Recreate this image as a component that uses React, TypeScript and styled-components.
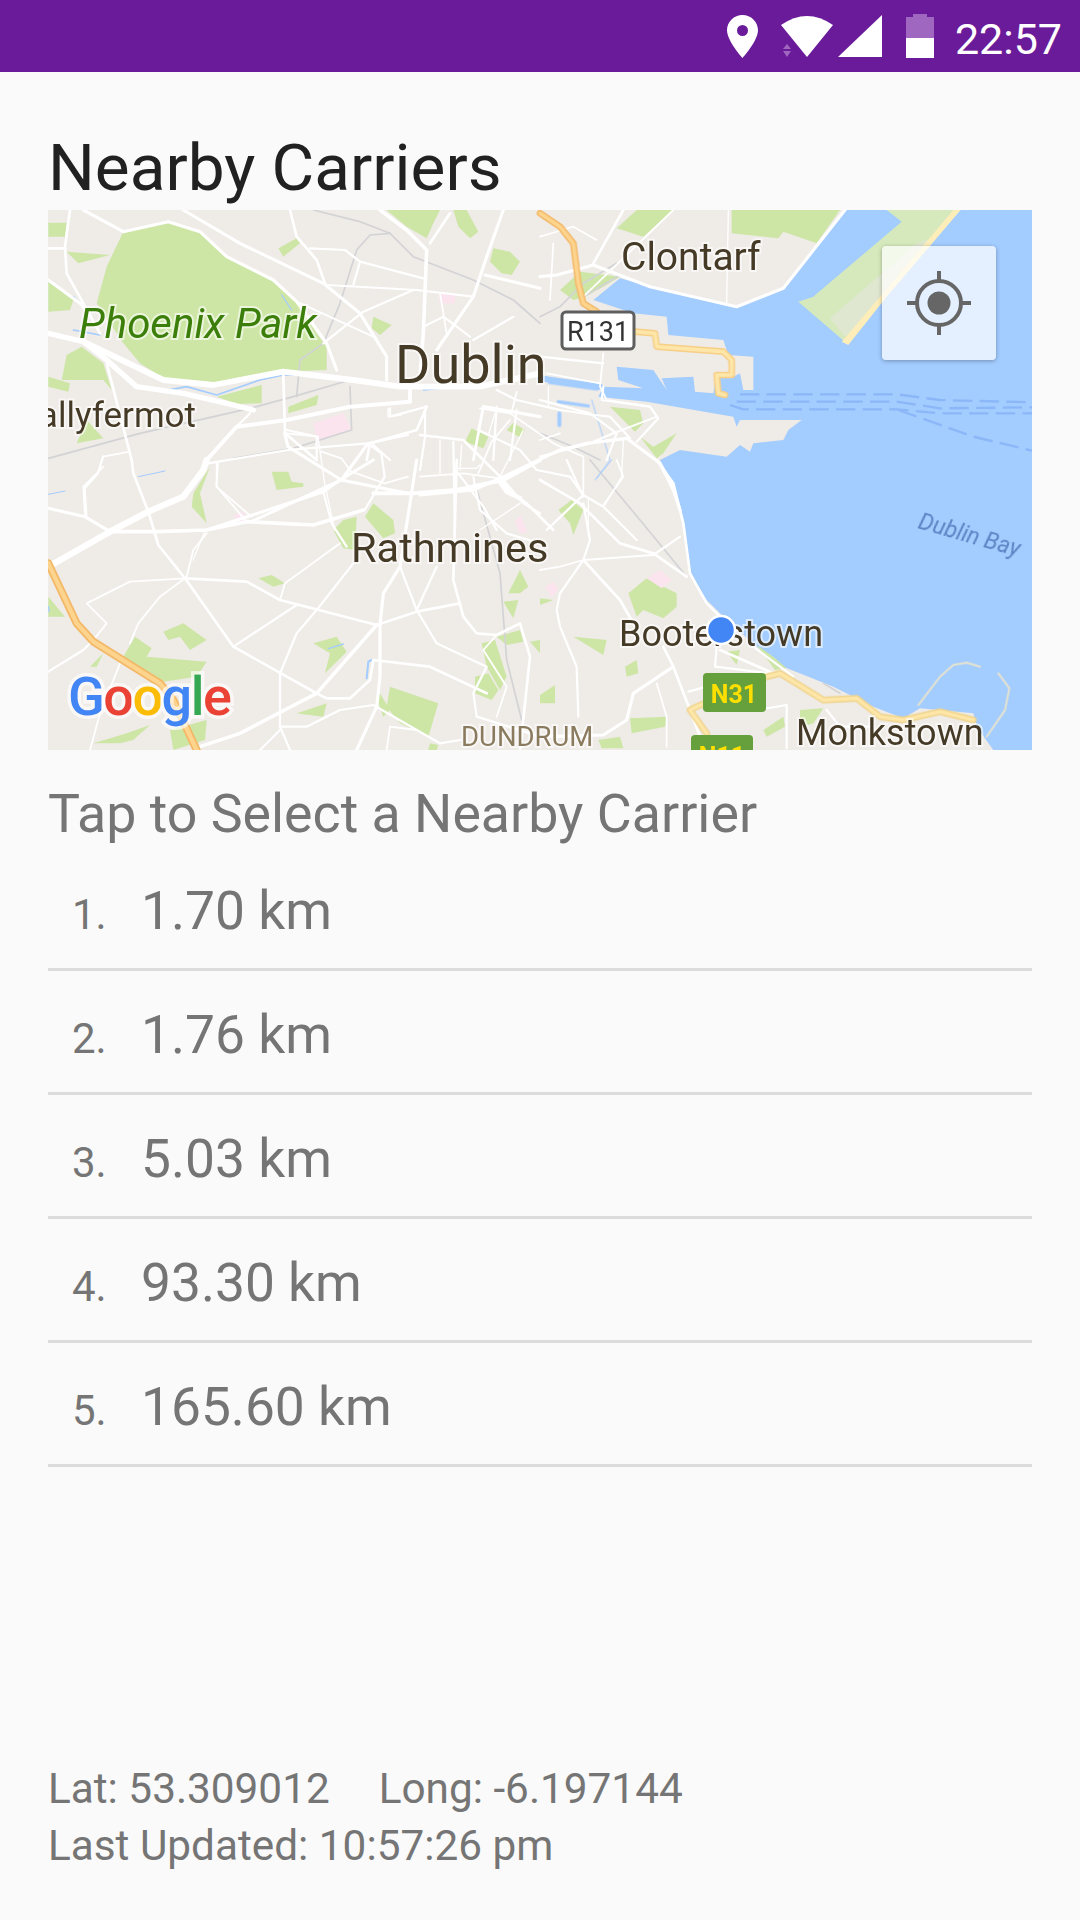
import React from "react";
import styled, { createGlobalStyle } from "styled-components";

const GlobalStyle = createGlobalStyle`
  html, body {
    margin: 0;
    padding: 0;
    background: #fafafa;
    overflow: hidden;
  }
`;

const COLORS = {
  land: "#efebe7",
  water: "#a3ccff",
  green: "#cde6a6",
  pink: "#fbe4ee",
  rail: "#d3d3d6",
};

// map shapes are traced in 3x crop coordinates, one group per crop
type Quarter = {
  x: number;
  y: number;
  greens: string[];
  pinks: string[];
  rails: string[];
  creeks: [number, string][];
  roads: [number, string][];
};

const NORTH_WEST: Quarter = {
  x: 40,
  y: 200,
  greens: [
    "250,95 385,65 480,95 560,170 700,240 770,305 830,400 860,440 860,510 730,515 520,550 370,535 300,490 250,430 170,310 200,200",
    "25,68 80,68 75,110 25,110",
    "80,155 210,165 115,190",
    "25,245 100,300 90,330 25,335",
    "125,440 190,490 215,570 190,540 65,540 80,465",
    "25,530 90,550 85,575 25,560",
    "530,590 665,555 665,610 590,612",
    "745,620 835,585 830,615 745,640",
    "715,145 770,115 780,130 730,170",
    "1040,30 1200,30 1180,70 1160,115 1100,80",
    "1240,30 1280,30 1315,95 1290,115 1255,80",
    "1360,145 1410,155 1440,185 1415,225 1385,220 1350,185",
    "1000,350 1055,375 1020,405 995,385",
    "1275,725 1295,685 1345,710 1330,745",
    "1400,690 1420,668 1455,690 1440,712",
    "110,730 140,660 190,715",
  ],
  pinks: ["820,670 910,640 935,690 830,720", "1195,280 1245,280 1245,310 1200,310"],
  rails: [
    "820,30 960,65 1050,100 1120,170 1300,240 1420,300 1500,370",
    "1050,100 990,105 950,150 900,310 850,430 780,480 770,590",
    "25,775 300,700 630,625 760,590 930,540",
    "930,560 935,690 760,745 580,775",
  ],
  creeks: [
    [5, "375,572 440,560 530,585 660,540 730,525 800,525 920,540"],
    [5, "130,320 100,290"],
    [4, "100,390 180,405"],
    [4, "725,285 755,330"],
    [4, "1150,570 1200,565"],
    [3, "755,655 830,645"],
  ],
  roads: [
    [6, "90,30 75,140 80,220 130,310 180,400"],
    [6, "25,145 75,145"],
    [7, "25,240 120,310 150,345"],
    [12, "25,400 130,425 200,480 290,560 430,580 560,610 640,630"],
    [7, "130,30 250,95 385,65 480,95 560,170 700,240 770,305 860,430 890,510"],
    [7, "430,30 600,130 850,250 960,340 1040,470 1040,540"],
    [6, "750,30 770,110 830,180 855,250"],
    [5, "810,145 915,150 960,185 1150,235"],
    [5, "860,255 1130,270 1300,290"],
    [5, "960,185 940,255"],
    [5, "850,430 970,335 1120,270"],
    [4, "770,305 1000,410"],
    [8, "1020,30 1100,90 1160,150 1150,400 1140,530"],
    [6, "1230,40 1170,130"],
    [7, "1390,30 1340,170 1300,290 1190,450"],
    [7, "1335,225 1500,265"],
    [13, "130,425 370,540 520,555 730,515 940,540 1080,560 1320,560 1500,520"],
    [6, "200,490 275,780"],
    [9, "1110,565 1110,605 930,620 740,660 590,680 500,780"],
    [6, "730,525 735,700 830,780"],
    [5, "740,690 830,710 830,780"],
    [5, "590,680 630,640"],
    [6, "1160,620 1130,690 990,730 980,780"],
    [5, "1050,625 1050,650 1160,620"],
    [6, "1330,620 1300,780"],
    [7, "1330,620 1500,650"],
    [5, "1370,620 1360,780"],
    [5, "1430,630 1410,780"],
    [5, "1000,735 1050,780"],
    [5, "1150,380 1210,350 1290,410"],
    [5, "1420,350 1300,420"],
    [4, "1200,280 1220,400"],
  ],
};

const NORTH_EAST: Quarter = {
  x: 540,
  y: 200,
  greens: [
    "230,85 290,30 400,30 310,110",
    "575,30 900,30 830,130 730,95 715,115 575,100",
    "60,270 120,215 240,230 190,260 135,290 100,300",
    "210,620 300,630 310,670 285,695",
    "300,710 340,740 410,700 370,760 350,775",
  ],
  pinks: [],
  rails: ["0,350 60,320 130,250 230,190", "0,700 100,740 180,780", "130,290 240,225"],
  creeks: [
    [18, "0,535 180,560"],
  ],
  roads: [
    [6, "250,30 160,190"],
    [7, "0,230 50,225 160,195 330,260 590,320 730,265 915,30"],
    [3, "565,30 560,310"],
    [4, "400,30 130,290"],
    [4, "40,130 30,300"],
    [4, "0,110 100,80 170,120"],
    [4, "190,460 180,560 200,600 330,620 350,650 220,700"],
    [5, "0,470 190,490"],
    [4, "20,520 180,550"],
    [5, "0,600 150,640 230,700 200,780"],
    [4, "60,700 0,720"],
    [5, "0,770 150,730 220,700"],
  ],
};

const SOUTH_WEST: Quarter = {
  x: 40,
  y: 460,
  greens: [
    "695,35 745,35 755,65 790,70 790,80 710,90",
    "910,180 950,170 945,270 910,265 880,210",
    "1000,130 1060,180 1065,220 1030,235 975,170",
    "655,355 695,345 735,370 700,380",
    "370,515 430,490 500,540 450,570 420,530 385,540",
    "820,550 890,530 920,575 855,640 870,580",
    "285,530 335,565 320,590 500,605 470,650 370,665 250,590",
    "150,620 190,580 170,620",
    "25,410 75,470 25,470",
    "1325,550 1365,540 1400,650 1380,690 1340,620",
    "1305,650 1345,640 1375,690 1355,720 1305,700",
    "1050,680 1195,730 1165,830 1080,790 1040,740",
    "1020,700 1050,750 1030,770 1015,730",
    "770,760 860,730 850,770",
    "160,850 260,820 330,795 280,840 240,850",
    "390,810 500,780 495,840 400,870",
    "1405,400 1440,330 1465,380 1440,400",
    "1390,425 1435,420 1420,475",
    "1370,530 1440,510 1450,545 1400,555",
    "1470,545 1500,540 1500,580",
    "1170,850 1195,855 1190,870 1165,870",
    "460,100 510,20 480,100 500,190 455,140",
  ],
  pinks: ["580,170 600,152 625,170 600,190", "1425,185 1442,165 1462,215 1440,222"],
  rails: ["1300,50 1380,340 1400,600 1445,780"],
  creeks: [
    [6, "980,655 985,605 995,600"],
    [4, "865,566 910,552"],
    [3, "295,50 375,33"],
    [3, "25,103 75,93"],
    [4, "25,440 28,455"],
  ],
  roads: [
    [7, "25,145 135,170 210,215"],
    [8, "210,215 350,215 500,210 620,185 820,195 970,150"],
    [14, "25,320 210,215 325,155 430,110 490,30 500,0"],
    [6, "325,155 280,40 275,0"],
    [6, "325,155 355,255 435,355 580,560 830,700 860,715 930,715 990,660 1000,600 1170,620 1340,700"],
    [4, "135,170 130,80 190,20"],
    [4, "435,355 270,365 140,430 200,490 160,540"],
    [4, "435,355 360,410 295,490 270,550"],
    [6, "435,355 620,365 720,420 1010,495 1130,455 1260,430"],
    [4, "500,220 460,270 440,350"],
    [4, "620,185 530,80 530,10"],
    [7, "500,210 850,95 900,60 1000,0"],
    [5, "850,95 875,190 920,260"],
    [4, "720,420 735,370 900,250"],
    [5, "770,435 580,560"],
    [5, "940,310 830,450 770,520 720,640 720,800 750,870"],
    [8, "1010,495 830,700 600,820 480,860"],
    [7, "1020,495 1020,650 1010,740 950,870"],
    [7, "1020,495 1030,400 1080,320 1110,130 1130,0"],
    [5, "1080,320 1130,450 1190,550 1340,620 1300,700 1310,770 1500,830"],
    [6, "1250,0 1240,360 1270,470 1310,520 1370,525 1440,490 1470,590 1440,870"],
    [5, "1190,320 1130,450"],
    [5, "720,800 800,800 900,750 1000,735 1130,810 1200,850 1260,840"],
    [5, "720,810 660,870"],
    [9, "1000,100 1120,100 1250,90 1390,60 1500,0"],
    [5, "1390,60 1450,130 1500,160"],
    [4, "1370,525 1330,570 1400,680 1370,770"],
    [5, "25,635 130,570 160,540"],
    [4, "240,610 180,760 150,870"],
    [4, "1040,870 1050,800 1130,810"],
    [5, "1300,50 1320,150 1400,220 1500,250"],
  ],
};

const SOUTH_EAST: Quarter = {
  x: 540,
  y: 460,
  greens: [
    "55,150 95,120 130,150 100,225 90,190",
    "265,400 320,355 410,400 410,440 370,475 310,450 290,470",
    "100,530 200,540 190,585",
    "560,575 600,570 590,615",
    "255,620 290,600 295,640 260,650",
    "0,705 45,675 45,730 0,730",
    "270,775 380,770 375,800 275,820",
    "175,840 240,830 250,865 185,865",
    "780,750 850,745 820,790 790,800 780,780",
    "670,810 730,770 735,800 680,830",
    "650,555 700,590 740,625 705,630",
    "0,415 40,420 0,435",
  ],
  pinks: ["320,355 360,330 395,360 365,385", "15,380 40,365 55,390 35,410"],
  rails: ["150,0 300,180 440,350", "850,670 900,700"],
  creeks: [[3, "170,55 215,0"]],
  roads: [
    [6, "0,60 120,130 240,250 340,280 440,350"],
    [5, "130,130 150,240 130,300 60,400 50,450 60,500 110,620 115,770"],
    [4, "190,135 250,50 230,0"],
    [6, "130,300 240,420 280,490"],
    [5, "340,285 420,230"],
    [5, "130,300 340,285"],
    [4, "0,330 60,320 130,300"],
    [5, "80,0 130,110"],
    [6, "350,0 400,70 430,190 450,340 500,430 540,470"],
    [6, "540,570 700,640"],
    [5, "640,560 760,650"],
    [6, "370,560 400,620 450,750 480,830"],
    [7, "0,830 190,825 260,780 280,700 400,620"],
    [5, "530,560 525,620 690,640"],
    [4, "350,670 380,770 380,860"],
    [5, "445,695 500,680"],
    [5, "680,745 740,735 740,865"],
    [5, "860,750 900,800 1000,800"],
  ],
};

const CITY_CENTRE: Quarter = {
  x: 420,
  y: 370,
  greens: [],
  pinks: [],
  rails: [],
  creeks: [
    [3, "515,90 570,270 525,330"],
    [10, "415,95 505,108"],
    [12, "418,130 418,165"],
    [14, "390,35 530,55"],
  ],
  roads: [
    [7, "0,375 160,360 240,325 420,240 500,220 620,205 720,280 760,360 780,420"],
    [5, "190,110 175,180 300,240 350,300 450,320 490,375 550,410 650,510"],
    [6, "0,195 130,210 240,320 270,365 320,400 400,480"],
    [4, "180,115 270,130 400,220 490,260 490,375"],
    [4, "270,150 215,215 175,310"],
    [3, "225,130 205,195"],
    [3, "310,180 240,320"],
    [3, "60,210 60,310"],
    [5, "100,215 105,500"],
    [3, "125,225 120,300"],
    [4, "0,320 130,310 240,325"],
    [3, "110,295 170,295 180,285"],
    [5, "115,310 190,410 230,480"],
    [3, "300,400 180,480"],
    [5, "490,375 380,480"],
    [3, "505,390 505,500"],
    [3, "610,210 605,320 555,405"],
    [4, "290,65 275,125"],
    [5, "230,60 290,90 420,120 520,135 570,140 630,205"],
    [3, "385,50 385,110"],
    [5, "550,50 545,90 690,110 715,145 650,215"],
    [5, "15,110 15,200 0,300"],
    [10, "235,330 260,365 300,385"],
  ],
};

const WEST_SIDE: Quarter = {
  x: 48,
  y: 400,
  greens: [],
  pinks: [],
  rails: [],
  creeks: [],
  roads: [
    [5, "480,190 720,150 960,130 1080,105"],
    [4, "510,190 505,260 610,350"],
    [5, "960,130 1000,160 1010,230 950,330"],
    [7, "610,365 880,240 960,130"],
    [7, "710,100 720,140 880,240 1080,280"],
    [5, "165,170 150,220 110,265 115,345"],
    [4, "165,170 245,155"],
    [3, "810,110 830,250 860,390"],
    [4, "820,155 880,175 910,215 1010,250 1080,230"],
    [3, "470,395 435,480"],
    [4, "715,100 810,110"],
    [3, "1020,25 1020,50 1060,45"],
  ],
};

const QUARTERS = [NORTH_WEST, NORTH_EAST, SOUTH_WEST, SOUTH_EAST, WEST_SIDE, CITY_CENTRE];

const ROAD_SCALE = 1.35;

const crop = (q: { x: number; y: number }) => `translate(${q.x} ${q.y}) scale(${1 / 3})`;

const toPage = (origin: [number, number], pts: [number, number][]) =>
  pts.map(([x, y]) => `${origin[0] + x / 3},${origin[1] + y / 3}`);

const WATER_POINTS = [
  ...toPage([540, 200], [
    [915, 30], [730, 265], [590, 325], [350, 265], [240, 235], [160, 300], [280, 340], [380, 350],
    [385, 405], [550, 420], [565, 465], [640, 470], [640, 570], [610, 570], [600, 520], [580, 530],
    [530, 520], [520, 580], [465, 575], [460, 530], [365, 535], [380, 570], [340, 510], [230, 500],
    [235, 540], [310, 565], [190, 560], [175, 590], [320, 605], [580, 650], [590, 680], [600, 660],
    [785, 660], [745, 690], [730, 720], [640, 730], [630, 755], [600, 735], [560, 770], [420, 750],
    [360, 780],
  ]),
  ...toPage([540, 460], [
    [360, 0], [400, 70], [430, 190], [450, 340], [500, 420], [540, 460], [650, 560], [730, 620],
    [880, 680], [1000, 740], [1090, 775], [1140, 745], [1300, 760], [1310, 800], [1360, 870],
  ]),
  "1032,750",
  "1032,210",
].join(" ");

const Page = styled.div`
  width: 1080px;
  height: 1920px;
  display: flex;
  flex-direction: column;
  background: #fafafa;
  font-family: Roboto, "Noto Sans", sans-serif;
`;

const StatusBar = styled.div`
  height: 72px;
  flex: none;
  background: #6a1b9a;
  display: flex;
  align-items: center;
  justify-content: flex-end;
  padding-right: 18px;
`;

const StatusIcon = styled.svg<{ $gap: number }>`
  display: block;
  margin-right: ${(p) => p.$gap}px;
`;

const Clock = styled.span`
  color: #fff;
  font-size: 43px;
  line-height: 72px;
  padding-top: 5px;
`;

const Content = styled.div`
  flex: 1;
  display: flex;
  flex-direction: column;
  padding: 53px 48px 46px;
`;

const Title = styled.h1`
  margin: 0;
  font-size: 65.7px;
  line-height: 85px;
  font-weight: 400;
  color: #212121;
`;

const MapBox = styled.div`
  position: relative;
  width: 984px;
  height: 540px;
  overflow: hidden;
  background: ${COLORS.land};
`;

const MapSvg = styled.svg`
  display: block;
`;

const SoftLayer = styled.g`
  filter: blur(0.5px);
`;

const PlaceLabel = styled.text<{ $size: number; $fill?: string; $italic?: boolean; $plain?: boolean }>`
  font-family: Roboto, sans-serif;
  font-size: ${(p) => p.$size}px;
  font-style: ${(p) => (p.$italic ? "italic" : "normal")};
  fill: ${(p) => p.$fill ?? "#453a26"};
  stroke: ${(p) => (p.$plain ? "none" : "rgba(255, 255, 255, 0.6)")};
  stroke-width: 4px;
  paint-order: stroke;
`;

const ShieldText = styled.text<{ $fill: string; $size: number; $bold?: boolean }>`
  font-family: Roboto, sans-serif;
  font-size: ${(p) => p.$size}px;
  font-weight: ${(p) => (p.$bold ? 700 : 400)};
  fill: ${(p) => p.$fill};
  text-anchor: middle;
`;

const GoogleMark = styled.text`
  font-family: Roboto, sans-serif;
  font-size: 54px;
  font-weight: 500;
  letter-spacing: -1.5px;
  stroke: rgba(255, 255, 255, 0.65);
  stroke-width: 7px;
  paint-order: stroke;
`;

const LocateButton = styled.div`
  position: absolute;
  top: 36px;
  right: 36px;
  width: 114px;
  height: 114px;
  border-radius: 4px;
  background: rgba(255, 255, 255, 0.7);
  box-shadow: 0 1px 4px rgba(0, 0, 0, 0.3);
  display: flex;
  align-items: center;
  justify-content: center;
`;

const Prompt = styled.div`
  margin-top: 31px;
  font-size: 53.7px;
  line-height: 66px;
  color: #757575;
`;

const CarrierList = styled.div`
  display: flex;
  flex-direction: column;
`;

const CarrierRow = styled.div`
  display: flex;
  align-items: baseline;
  height: 121px;
  border-bottom: 3px solid #dcdcdc;
`;

const RowIndex = styled.span`
  width: 93px;
  padding-left: 24px;
  box-sizing: border-box;
  padding-top: 31px;
  font-size: 42px;
  line-height: 66px;
  color: #757575;
`;

const RowDistance = styled.span`
  padding-top: 31px;
  font-size: 53.3px;
  line-height: 66px;
  color: #757575;
`;

const Footer = styled.div`
  margin-top: auto;
  font-size: 42.3px;
  line-height: 57px;
  color: #757575;
`;

const FooterRow = styled.div`
  display: flex;
  gap: 49px;
`;

const DISTANCES = ["1.70 km", "1.76 km", "5.03 km", "93.30 km", "165.60 km"];

const HIGHWAY_NORTH = "0,40 60,80 100,130 115,250 130,310 170,335";
const HIGHWAY_PORT = "285,395 345,400 350,440 550,455 575,480 575,525 530,525 535,580 555,585";
const HIGHWAY_WEST = "25,310 110,490 160,545 360,670 400,720 470,870";
const HIGHWAY_COAST =
  "500,820 450,750 470,740 680,650 720,640 850,720 950,715 1020,770 1090,780 1200,755 1300,780";

function Carto() {
  return (
    <MapSvg width={984} height={540} viewBox="48 210 984 540">
      <SoftLayer fill="none" strokeLinejoin="round" strokeLinecap="round">
        <polygon points={WATER_POINTS} fill={COLORS.water} />

        {QUARTERS.map((q) => (
          <g key={`fill-${q.x}-${q.y}`} transform={crop(q)}>
            {q.greens.map((pts) => (
              <polygon key={pts} points={pts} fill={COLORS.green} />
            ))}
            {q.pinks.map((pts) => (
              <polygon key={pts} points={pts} fill={COLORS.pink} />
            ))}
          </g>
        ))}

        {/* Bull Island and the shipping lanes */}
        <g transform={crop(NORTH_EAST)}>
          <polygon points="1040,30 1250,30 920,430 775,305 820,290 1085,65" fill="#d6e9bc" />
          <polygon points="870,355 1130,130 1190,110 1040,280 960,370 915,410" fill="#dfe7d0" />
          <polygon points="1262,30 1240,30 1020,290 905,425 925,435 1040,290" fill="#fdedb9" />
          <g stroke="#8bb7f8" strokeWidth={7} strokeDasharray="58 22" strokeLinecap="butt">
            <polyline points="600,583 1070,583 1200,600 1476,607" />
            <polyline points="590,605 1070,605 1200,625 1476,622" />
            <polyline points="570,615 610,628 1070,628 1200,640 1476,640" />
            <polyline points="1075,630 1300,710 1476,752" />
          </g>
        </g>

        {QUARTERS.map((q) => (
          <g key={`line-${q.x}-${q.y}`} transform={crop(q)}>
            {q.creeks.map(([w, pts]) => (
              <polyline key={pts} points={pts} stroke={COLORS.water} strokeWidth={w} />
            ))}
            {q.rails.map((pts) => (
              <polyline key={pts} points={pts} stroke={COLORS.rail} strokeWidth={5} />
            ))}
          </g>
        ))}

        {QUARTERS.map((q) => (
          <g key={`road-${q.x}-${q.y}`} transform={crop(q)}>
            {q.roads.map(([w, pts]) => (
              <polyline key={pts} points={pts} stroke="#fff" strokeWidth={w * ROAD_SCALE} />
            ))}
          </g>
        ))}

        <g transform={crop(NORTH_EAST)}>
          <polyline points={HIGHWAY_NORTH} stroke="#f3b968" strokeWidth={20} />
          <polyline points={HIGHWAY_NORTH} stroke="#fdd48e" strokeWidth={11} />
          <polyline points={HIGHWAY_PORT} stroke="#f7cf86" strokeWidth={20} />
          <polyline points={HIGHWAY_PORT} stroke="#fde6a8" strokeWidth={11} />
        </g>
        <g transform={crop(SOUTH_WEST)}>
          <polyline points={HIGHWAY_WEST} stroke="#f3b968" strokeWidth={24} />
          <polyline points={HIGHWAY_WEST} stroke="#fdd48e" strokeWidth={13} />
        </g>
        <g transform={crop(SOUTH_EAST)}>
          <polyline points={HIGHWAY_COAST} stroke="#f0d48c" strokeWidth={20} />
          <polyline points={HIGHWAY_COAST} stroke="#fde6a8" strokeWidth={11} />
          <polyline points="1135,735 1200,650 1240,615 1280,608 1320,620" stroke="#e6e3cf" strokeWidth={6} />
          <polyline points="1375,640 1408,685 1395,750 1340,830" stroke="#e6e3cf" strokeWidth={6} />
        </g>
      </SoftLayer>

      <PlaceLabel x={79} y={338} $size={42} $fill="#3c7e0a" $italic>Phoenix Park</PlaceLabel>
      <PlaceLabel x={196} y={427} $size={35} textAnchor="end">Ballyfermot</PlaceLabel>
      <PlaceLabel x={395} y={383} $size={54}>Dublin</PlaceLabel>
      <PlaceLabel x={621} y={270} $size={39}>Clontarf</PlaceLabel>
      <PlaceLabel x={351} y={562} $size={41.5}>Rathmines</PlaceLabel>
      <PlaceLabel x={619} y={646} $size={36}>Booterstown</PlaceLabel>
      <PlaceLabel x={796} y={745} $size={36}>Monkstown</PlaceLabel>
      <PlaceLabel x={461} y={746} $size={27.5} $fill="#8a7b5e">DUNDRUM</PlaceLabel>
      <PlaceLabel x={917} y={528} $size={23} $fill="#5b84c4" $italic $plain transform="rotate(16 917 528)">Dublin Bay</PlaceLabel>

      <rect x={562} y={312} width={72} height={37} rx={4} fill="#fff" stroke="#5f5f5f" strokeWidth={3} />
      <ShieldText x={598} y={341} $size={27} $fill="#333">R131</ShieldText>

      <rect x={703} y={673} width={63} height={39} rx={4} fill="#66a03c" />
      <ShieldText x={734} y={703} $size={25} $fill="#ffdf00" $bold>N31</ShieldText>
      <rect x={691} y={735} width={62} height={39} rx={4} fill="#66a03c" />
      <ShieldText x={722} y={765} $size={25} $fill="#ffdf00" $bold>N11</ShieldText>

      <circle cx={721} cy={630} r={14} fill="#4285f4" stroke="#fff" strokeWidth={2.5} />

      <GoogleMark x={68} y={715}>
        <tspan fill="#4285f4">G</tspan>
        <tspan fill="#ea4335">o</tspan>
        <tspan fill="#fbbc05">o</tspan>
        <tspan fill="#4285f4">g</tspan>
        <tspan fill="#34a853">l</tspan>
        <tspan fill="#ea4335">e</tspan>
      </GoogleMark>
    </MapSvg>
  );
}

export default function App() {
  return (
    <>
      <GlobalStyle />
      <Page>
        <StatusBar>
          <StatusIcon $gap={23} width={31} height={43} viewBox="0 0 31 43">
            <path
              fill="#fff"
              fillRule="evenodd"
              d="M15.5 0C7 0 0 6.8 0 15.3 0 26 15.5 43 15.5 43S31 26 31 15.3C31 6.8 24 0 15.5 0zm0 10a5.5 5.5 0 1 1 0 11 5.5 5.5 0 0 1 0-11z"
            />
          </StatusIcon>
          <StatusIcon $gap={5} width={52} height={41} viewBox="0 0 52 41">
            <path fill="#fff" d="M0 9Q26 -9 52 9L26 41Z" />
            <polygon fill="#a067c0" points="6,28 2,33 10,33" />
            <polygon fill="#a067c0" points="2,35 10,35 6,41" />
          </StatusIcon>
          <StatusIcon $gap={24} width={44} height={42} viewBox="0 0 44 42">
            <polygon fill="#fff" points="0,42 44,0 44,42" />
          </StatusIcon>
          <StatusIcon $gap={21} width={28} height={44} viewBox="0 0 28 44">
            <path fill="#a067c0" d="M7 0h14v3h7v21H0V3h7z" />
            <rect y={24} width={28} height={20} fill="#fff" />
          </StatusIcon>
          <Clock>22:57</Clock>
        </StatusBar>
        <Content>
          <Title>Nearby Carriers</Title>
          <MapBox>
            <Carto />
            <LocateButton>
              <svg width={66} height={66} viewBox="0 0 66 66">
                <circle cx={33} cy={33} r={22} fill="none" stroke="#666" strokeWidth={4} />
                <circle cx={33} cy={33} r={11.5} fill="#666" />
                <path d="M33 1v10M33 55v10M1 33h10M55 33h10" stroke="#666" strokeWidth={4} />
              </svg>
            </LocateButton>
          </MapBox>
          <Prompt>Tap to Select a Nearby Carrier</Prompt>
          <CarrierList>
            {DISTANCES.map((d, i) => (
              <CarrierRow key={d}>
                <RowIndex>{i + 1}.</RowIndex>
                <RowDistance>{d}</RowDistance>
              </CarrierRow>
            ))}
          </CarrierList>
          <Footer>
            <FooterRow>
              <span>Lat: 53.309012</span>
              <span>Long: -6.197144</span>
            </FooterRow>
            <div>Last Updated: 10:57:26 pm</div>
          </Footer>
        </Content>
      </Page>
    </>
  );
}
